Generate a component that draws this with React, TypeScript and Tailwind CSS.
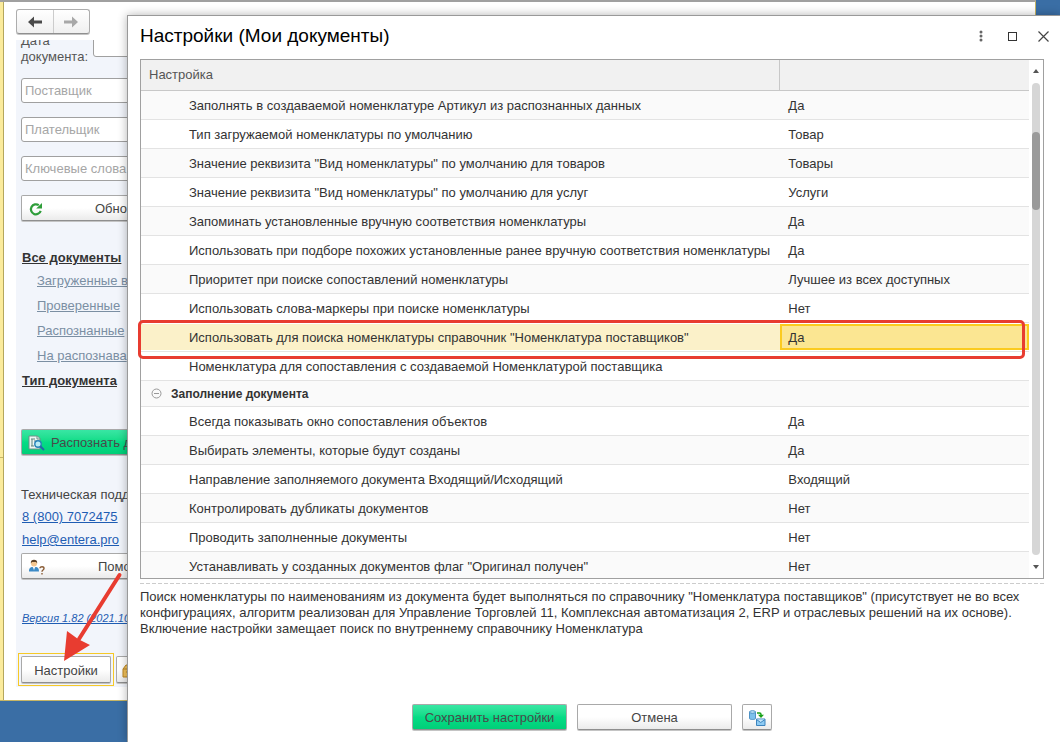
import React from 'react';

interface SettingRow {
    name: string;
    value: string;
    group?: boolean;
    selected?: boolean;
}

const rows: SettingRow[] = [
    { name: 'Заполнять в создаваемой номенклатуре Артикул из распознанных данных', value: 'Да' },
    { name: 'Тип загружаемой номенклатуры по умолчанию', value: 'Товар' },
    { name: 'Значение реквизита "Вид номенклатуры" по умолчанию для товаров', value: 'Товары' },
    { name: 'Значение реквизита "Вид номенклатуры" по умолчанию для услуг', value: 'Услуги' },
    { name: 'Запоминать установленные вручную соответствия номенклатуры', value: 'Да' },
    { name: 'Использовать при подборе похожих установленные ранее вручную соответствия номенклатуры', value: 'Да' },
    { name: 'Приоритет при поиске сопоставлений номенклатуры', value: 'Лучшее из всех доступных' },
    { name: 'Использовать слова-маркеры при поиске номенклатуры', value: 'Нет' },
    { name: 'Использовать для поиска номенклатуры справочник "Номенклатура поставщиков"', value: 'Да', selected: true },
    { name: 'Номенклатура для сопоставления с создаваемой Номенклатурой поставщика', value: '' },
    { name: 'Заполнение документа', value: '', group: true },
    { name: 'Всегда показывать окно сопоставления объектов', value: 'Да' },
    { name: 'Выбирать элементы, которые будут созданы', value: 'Да' },
    { name: 'Направление заполняемого документа Входящий/Исходящий', value: 'Входящий' },
    { name: 'Контролировать дубликаты документов', value: 'Нет' },
    { name: 'Проводить заполненные документы', value: 'Нет' },
    { name: 'Устанавливать у созданных документов флаг "Оригинал получен"', value: 'Нет' },
];

const filters = ['Поставщик', 'Плательщик', 'Ключевые слова'];
const statusLinks = ['Загруженные в', 'Проверенные', 'Распознанные', 'На распознава'];

const buttonBase = 'flex items-center rounded-[2px] border border-[#a9a9a9] border-b-[#8f8f8f] pt-[2px] shadow-[0_1px_0_#c4c4c4]';
const plainButton = `${buttonBase} bg-linear-to-b from-white from-50% to-[#ebebeb] text-[#444]`;
const greenButton = `${buttonBase} bg-linear-to-b from-[#38e6a4] via-[#06dc86] to-[#00cf78] text-[#4a4a4a]`;

const ArrowIcon: React.FC<{ className: string }> = ({ className }) => (
    <svg viewBox="0 0 14 12" className={className} fill="currentColor">
        <path d="M0 6 6 .5V4.600h8v2.800H6v4.100z" />
    </svg>
);

const RefreshIcon = () => (
    <svg viewBox="0 0 14 14" className="h-[14px] w-[14px] shrink-0">
        <path d="M11.700 8.800A5 5 0 1 1 9.800 3.200" fill="none" stroke="#2f9e3a" strokeWidth="2.200" />
        <path d="M13 1v5.600H7.200z" fill="#2f9e3a" />
    </svg>
);

const RecognizeIcon = () => (
    <svg viewBox="0 0 17 16" className="h-4 w-[17px] shrink-0">
        <path d="M1 1h8.500L12 3.500V14H1z" fill="#eef6f2" stroke="#6f8f88" />
        <path d="M9 1v3h3" fill="none" stroke="#6f8f88" />
        <path d="M3 4h4M4 4v7M3 11h3M6 6h3" stroke="#5f857d" />
        <circle cx="10" cy="9" r="3.200" fill="#b9ecf5" stroke="#2580b8" strokeWidth="1.400" />
        <path d="m12.300 11.300 3.700 3.700" stroke="#2566a8" strokeWidth="2" />
    </svg>
);

const SupportIcon = () => (
    <svg viewBox="0 0 16 16" className="h-4 w-4 shrink-0">
        <circle cx="5" cy="4.500" r="3" fill="#f3c690" />
        <path d="M1.800 4.500C1.600 1.600 3 .7 5 .7s3.500.9 3.200 3.800L7 3H3z" fill="#5a4026" />
        <path d="M0 12.500c0-3.500 1.600-4.500 3.500-4.500L5 9.500 6.500 8c2 0 3.500 1 3.500 4.500z" fill="#3b8ac6" />
        <path d="m4.200 8.500.8 3 .8-3z" fill="#fff" />
        <path d="M11 9.300c0-2 4-2 4 .1 0 1.600-2 1.500-2 3.300M13 14v1.400" fill="none" stroke="#8a5c36" strokeWidth="1.400" />
    </svg>
);

const ExportIcon = () => (
    <svg viewBox="0 0 17 16" className="h-4 w-[17px] shrink-0">
        <path d="M.5 2v6.500c0 1.300 6 1.300 6 0V2z" fill="#7cc0ec" stroke="#4c91c5" />
        <ellipse cx="3.500" cy="2" rx="3" ry="1.300" fill="#c5e6fa" stroke="#4c91c5" />
        <path d="M8 3h2.500c1 0 1.500.6 1.500 1.500V6" fill="none" stroke="#18a018" strokeWidth="1.500" />
        <path d="M9 4.800h6L12 8z" fill="#18a018" />
        <path d="M7.500 9h8.500v6.500H7.500z" fill="#8ecbf3" stroke="#3c83bd" />
        <path d="m7.500 9.500 4.200 3 4.300-3" fill="#c5e6fa" stroke="#3c83bd" />
    </svg>
);

const BoxIcon = () => (
    <svg viewBox="0 0 14 14" className="h-[14px] w-[14px] shrink-0">
        <path d="M1 5 4 1h9v12H1z" fill="#f2c25c" stroke="#b98424" />
        <path d="M1 5h12M4 8h6" stroke="#b98424" />
    </svg>
);

const Sidebar = () => (
    <aside className="ml-3 flex min-h-0 w-[240px] flex-col">
        <nav className="mt-[7px] flex h-[25px] w-[74px] shrink-0 rounded-[3px] border border-[#adadad] border-b-[#8f8f8f] bg-linear-to-b from-white to-[#f0f0f0] shadow-[0_1px_0_#c4c4c4]">
            <button aria-label="Назад" className="flex flex-1 items-center justify-center border-r border-[#ccc] text-[#4a4a4a]">
                <ArrowIcon className="h-3 w-[14px]" />
            </button>
            <button aria-label="Вперед" className="flex flex-1 items-center justify-center text-[#a8a8a8]">
                <ArrowIcon className="h-3 w-[14px] rotate-180" />
            </button>
        </nav>

        <div className="mt-[6px] mb-[13px] min-h-0 flex-1 overflow-hidden bg-[#f2f5fb] px-[5px]">
            <div className="-mt-[7px] flex h-[45px] text-[#555]">
                <label htmlFor="date" className="w-[72px] leading-4">Дата документа:</label>
                <input id="date" className="h-[24px] min-w-0 flex-1 rounded-[3px] border border-[#a0a0a0] bg-white" />
            </div>

            <div className="flex flex-col gap-[14px]">
                {filters.map((label) => (
                    <input
                        key={label}
                        aria-label={label}
                        placeholder={label}
                        className="h-[25px] rounded-[3px] border border-[#a0a0a0] bg-white px-[3px] placeholder:text-[#a6a6a6]"
                    />
                ))}
                <button className={`${plainButton} h-[26px] w-full px-[7px]`}>
                    <RefreshIcon />
                    <span className="ml-[52px]">Обновить</span>
                </button>
            </div>

            <h2 className="mt-[29px] pl-px leading-4 font-bold text-[#333] underline">Все документы</h2>
            <ul className="mt-[2px] pl-4 leading-[25px]">
                {statusLinks.map((link) => (
                    <li key={link}>
                        <a href="#" className="text-[#7b8fa3] underline">{link}</a>
                    </li>
                ))}
            </ul>
            <h2 className="mt-[5px] pl-px leading-4 font-bold text-[#333] underline">Тип документа</h2>

            <button className={`${greenButton} mt-10 h-[26px] w-full px-[6px]`}>
                <RecognizeIcon />
                <span className="ml-[6px]">Распознать документы</span>
            </button>

            <p className="mt-8 leading-4 text-[#444]">Техническая поддержка</p>
            <div className="mt-[2px] flex flex-col items-start pl-px leading-[23px] text-[#1f5db3] underline">
                <a href="#">8 (800) 7072475</a>
                <a href="#">help@entera.pro</a>
            </div>
            <button className={`${plainButton} mt-[2px] h-[26px] w-full px-[7px]`}>
                <SupportIcon />
                <span className="ml-[53px]">Помощь</span>
            </button>

            <a href="#" className="mt-[31px] block pl-px text-[11px] leading-4 text-[#1f5db3] italic underline">Версия 1.82 (2021.10)</a>

            <div className="mt-[27px] -ml-[3px] flex items-center gap-[2px]">
                <div className="border border-[#f6c927] p-[2px]">
                    <button className={`${plainButton} h-[27px] w-[90px] justify-center`}>Настройки</button>
                </div>
                <button aria-label="Архив" className={`${plainButton} h-[27px] w-[30px] px-[5px]`}>
                    <BoxIcon />
                </button>
            </div>
        </div>
    </aside>
);

const SettingsTable = () => (
    <div className="relative mt-[10px] flex h-[520px] border border-[#a0a0a0]">
        <div className="min-w-0 flex-1 overflow-hidden">
            <table className="w-full table-fixed border-separate border-spacing-0 text-left text-[#333]">
                <thead>
                    <tr className="h-[31px] text-[#555]">
                        <th className="w-[72%] border-r border-b border-[#c8c8c8] bg-[#f1f1f1] pl-2 font-normal">Настройка</th>
                        <th aria-label="Значение" className="border-b border-[#c8c8c8] bg-[#f1f1f1]" />
                    </tr>
                </thead>
                <tbody>
                    {rows.map((row) => row.group ? (
                        <tr key={row.name} className="h-[26px] bg-[#fafafa]">
                            <th colSpan={2} className="border-b border-[#e3e3e3] pl-[10px] text-[12px] leading-4">
                                <button className="flex items-center gap-[9px] text-left">
                                    <svg viewBox="0 0 11 11" className="h-[11px] w-[11px]" fill="none" stroke="#999">
                                        <circle cx="5.500" cy="5.500" r="4.500" />
                                        <path d="M3 5.500h5" />
                                    </svg>
                                    {row.name}
                                </button>
                            </th>
                        </tr>
                    ) : row.selected ? (
                        <tr key={row.name} className="h-[29px]">
                            <td className="border-b border-[#e3e3e3] py-px whitespace-nowrap">
                                <div className="flex h-[26px] items-center bg-[#fbf1c9] pt-px pl-12">{row.name}</div>
                            </td>
                            <td className="border-b border-[#e3e3e3] py-px">
                                <div className="flex h-[26px] items-center border-2 border-[#fbcb1f] bg-[#fbe692] pt-px pl-[6px]">{row.value}</div>
                            </td>
                        </tr>
                    ) : (
                        <tr key={row.name} className="h-[29px] odd:bg-[#fafafa]">
                            <td className="border-b border-[#e3e3e3] pt-[2px] pl-12 whitespace-nowrap">{row.name}</td>
                            <td className="border-b border-[#e3e3e3] pt-[2px] pl-2 whitespace-nowrap">{row.value}</td>
                        </tr>
                    ))}
                </tbody>
            </table>
        </div>

        <div className="flex w-[14px] flex-col items-center">
            <svg viewBox="0 0 6 4" className="mt-[9px] h-1 w-[6px]" fill="#555">
                <path d="M3 0 6 4H0z" />
            </svg>
            <div className="mt-[10px] w-2 flex-1 rounded-full bg-[#d6d6d6] pt-[49px]">
                <div className="h-[78px] rounded-full bg-[#9a9a9a]" />
            </div>
            <svg viewBox="0 0 6 4" className="mt-[10px] mb-[9px] h-1 w-[6px]" fill="#555">
                <path d="M3 4 6 0H0z" />
            </svg>
        </div>

        <div className="pointer-events-none absolute top-[260px] right-[18px] -left-[3px] h-[39px] rounded-[5px] border-3 border-[#e83c30]" />
    </div>
);

const SettingsDialog = () => (
    <section
        role="dialog"
        aria-label="Настройки"
        className="absolute top-[15px] right-0 bottom-0 left-[127px] border-t border-l border-[#999] bg-white pr-4 pl-3 shadow-[0_0_9px_rgba(0,0,0,0.3)]"
    >
        <header className="flex h-[33px] items-center justify-between pt-[7px]">
            <h1 className="text-[19px] leading-[22px] text-black">Настройки (Мои документы)</h1>
            <div className="-mr-[7px] flex items-center gap-[15px] text-[#444]">
                <button aria-label="Еще" className="flex h-5 w-4 items-center justify-center">
                    <svg viewBox="0 0 4 12" className="h-3 w-1" fill="#666">
                        <circle cx="2" cy="2" r="1.500" />
                        <circle cx="2" cy="6" r="1.500" />
                        <circle cx="2" cy="10" r="1.500" />
                    </svg>
                </button>
                <button aria-label="Развернуть" className="flex h-5 w-4 items-center justify-center">
                    <span className="h-[9px] w-[9px] border border-[#333]" />
                </button>
                <button aria-label="Закрыть" className="flex h-5 w-4 items-center justify-center">
                    <svg viewBox="0 0 11 11" className="h-[11px] w-[11px]" stroke="#444" strokeWidth="1.200">
                        <path d="m.5.5 10 10M10.500.5l-10 10" />
                    </svg>
                </button>
            </div>
        </header>

        <SettingsTable />

        <svg className="mt-1 block h-px w-full">
            <path d="M0 .5H2000" stroke="#ccc" strokeDasharray="4 2" />
        </svg>
        <p className="mt-[5px] leading-4 text-[#333]">
            Поиск номенклатуры по наименованиям из документа будет выполняться по справочнику "Номенклатура поставщиков" (присутствует не во всех конфигурациях, алгоритм реализован для Управление Торговлей 11, Комплексная автоматизация 2, ERP и отраслевых решений на их основе). Включение настройки замещает поиск по внутреннему справочнику Номенклатура
        </p>

        <footer className="mt-[67px] flex justify-center gap-[10px]">
            <button className={`${greenButton} h-[26px] w-[155px] justify-center`}>Сохранить настройки</button>
            <button className={`${plainButton} h-[26px] w-[155px] justify-center`}>Отмена</button>
            <button aria-label="Выгрузить настройки" className={`${plainButton} h-[26px] w-[30px] justify-center`}>
                <ExportIcon />
            </button>
        </footer>
    </section>
);

export default function App() {
    return (
        <div className="relative flex h-screen overflow-hidden bg-[#3a6ea5] pr-6 pb-[41px] font-['Liberation_Sans',Arial,sans-serif] text-[13px]">
            <main className="flex min-w-0 flex-1 border-t-2 border-r border-b border-t-[#a0a0a0] border-r-[#c6b565] border-b-[#c6b565] bg-white">
                <div className="w-1 shrink-0 border-r border-[#b5a75c] bg-[#fbeb9c]">
                    <div className="h-[456px] border-b border-[#c6b565]" />
                </div>
                <Sidebar />
            </main>

            <SettingsDialog />

            <svg viewBox="0 0 64 92" className="pointer-events-none absolute top-[571px] left-[62px] h-[92px] w-16">
                <path d="M57.500 4 17 68" stroke="#e83c30" strokeWidth="4" strokeLinecap="round" />
                <path d="M2 90 5 60l11 8 12 6z" fill="#e83c30" />
            </svg>
        </div>
    );
}
